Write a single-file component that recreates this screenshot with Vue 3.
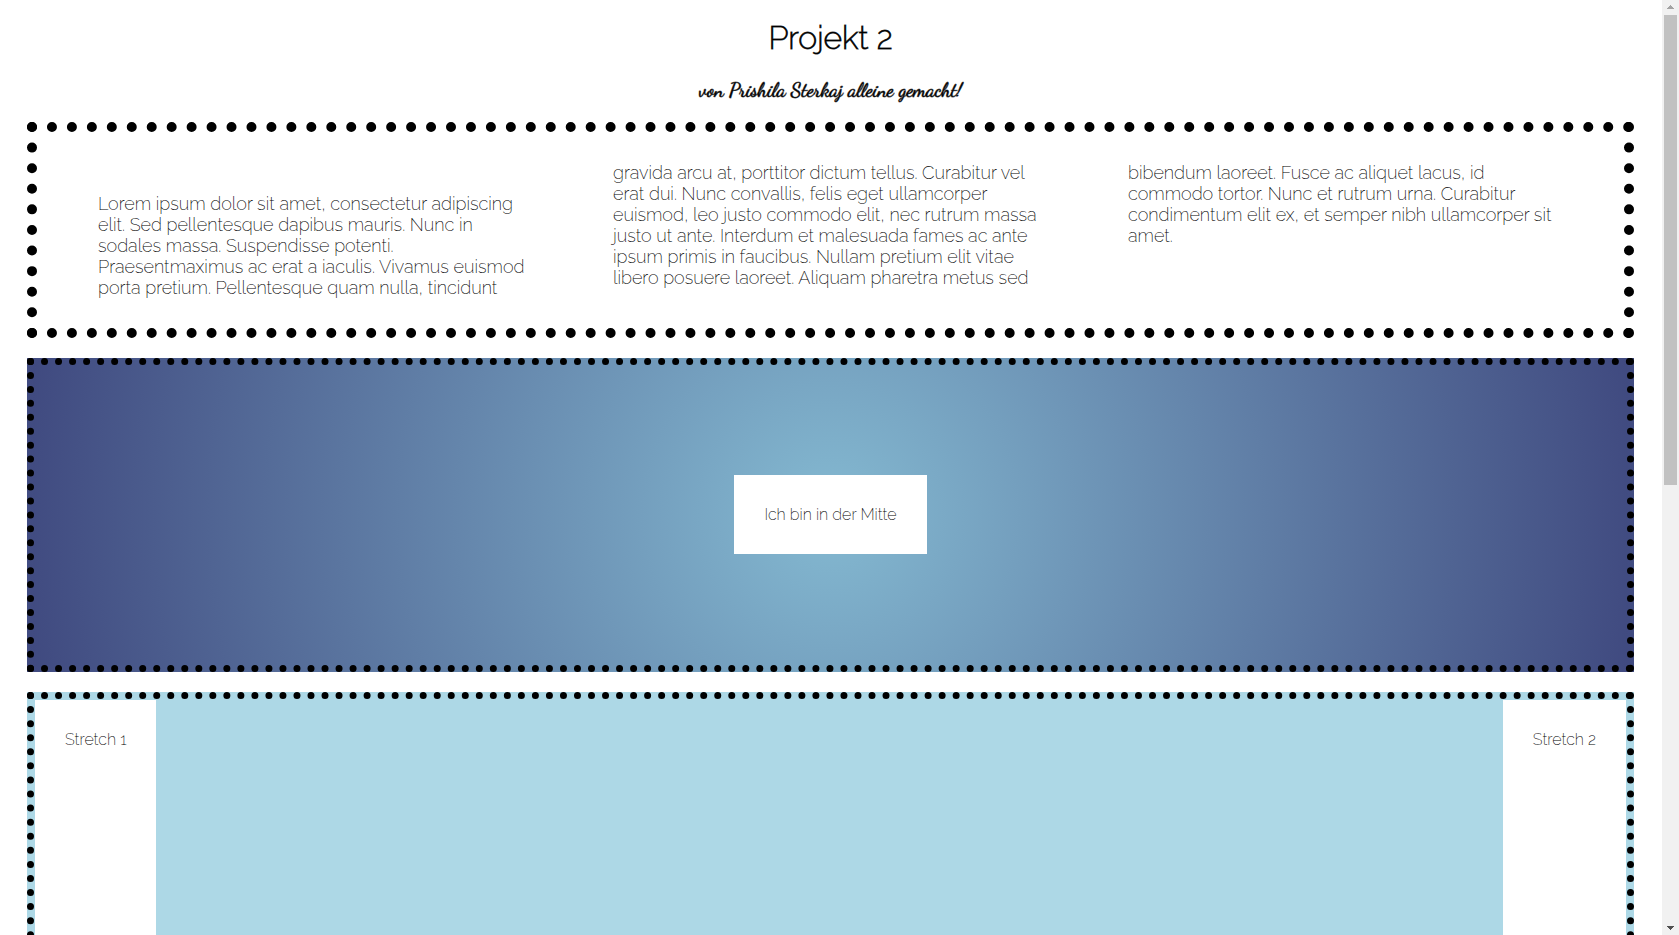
<script setup>
const columns = [
  [
    'Lorem ipsum dolor sit amet, consectetur adipiscing',
    'elit. Sed pellentesque dapibus mauris. Nunc in',
    'sodales massa. Suspendisse potenti.',
    'Praesentmaximus ac erat a iaculis. Vivamus euismod',
    'porta pretium. Pellentesque quam nulla, tincidunt',
  ],
  [
    'gravida arcu at, porttitor dictum tellus. Curabitur vel',
    'erat dui. Nunc convallis, felis eget ullamcorper',
    'euismod, leo justo commodo elit, nec rutrum massa',
    'justo ut ante. Interdum et malesuada fames ac ante',
    'ipsum primis in faucibus. Nullam pretium elit vitae',
    'libero posuere laoreet. Aliquam pharetra metus sed',
  ],
  [
    'bibendum laoreet. Fusce ac aliquet lacus, id',
    'commodo tortor. Nunc et rutrum urna. Curabitur',
    'condimentum elit ex, et semper nibh ullamcorper sit',
    'amet.',
  ],
]
</script>

<template>
  <div class="window">
    <main class="page">
      <h1>Projekt 2</h1>
      <h2>von Prishila Sterkaj alleine gemacht!</h2>

      <section class="box columns">
        <p v-for="(lines, i) in columns" :key="i">
          <span v-for="line in lines" :key="line">{{ line }}</span>
        </p>
      </section>

      <section class="box middle">
        <div class="card">Ich bin in der Mitte</div>
      </section>

      <section class="box stretch">
        <div class="card">Stretch 1</div>
        <div class="card">Stretch 2</div>
      </section>
    </main>

    <div class="scrollbar" aria-hidden="true">
      <svg class="up" width="17" height="15" viewBox="0 0 17 15" shape-rendering="crispEdges">
        <path d="M8 5h1v1h1v1h1v1h1v1H5V8h1V7h1V6h1z" />
      </svg>
      <div class="thumb"></div>
      <svg class="down" width="17" height="15" viewBox="0 0 17 15" shape-rendering="crispEdges">
        <path d="M5 6h7v1h-1v1h-1v1H9v1H8V9H7V8H6V7H5z" />
      </svg>
    </div>
  </div>
</template>

<style>
body {
  margin: 0;
  background: #fff;
}
</style>

<style scoped>
.window {
  display: flex;
  height: 100vh;
  overflow: hidden;
  color: #000;
  font-family: Raleway, Lato, sans-serif;
  font-weight: 200;
}

.page {
  flex: 1;
  min-width: 0;
  padding: 19px 28px 0 27px;
}

h1 {
  margin: 0;
  font-size: 32px;
  font-weight: 200;
  line-height: 38px;
  text-align: center;
  -webkit-text-stroke: 1px rgba(0, 0, 0, 0.8);
}

h2 {
  margin: 21px 0 19px;
  font-family: "Dancing Script", "Liberation Serif", serif;
  font-size: 20px;
  font-weight: 400;
  line-height: 25px;
  text-align: center;
  -webkit-text-stroke: 1px rgba(0, 0, 0, 0.6);
}

.box {
  box-sizing: border-box;
  margin-bottom: 20px;
  border: 7px dotted #000;
  padding: 1px;
}

.columns {
  display: grid;
  grid-template-columns: repeat(3, minmax(0, 1fr));
  gap: 20px;
  border-width: 10px;
  padding: 30px 31px;
  font-size: 18px;
  line-height: 21px;
}

.columns p {
  margin: 0;
  padding: 0 30px;
}

.columns p:first-child {
  padding-top: 31px;
}

.columns span {
  display: block;
  white-space: nowrap;
}

.middle {
  display: flex;
  align-items: center;
  justify-content: center;
  height: 314px;
  padding-bottom: 2px;
  background: radial-gradient(circle, #84b9d1 0%, #404a80 100%);
}

.stretch {
  display: flex;
  justify-content: space-between;
  height: 514px;
  background: lightblue;
}

.card {
  padding: 30px;
  background: #fff;
  font-size: 16px;
  line-height: 19px;
}

.scrollbar {
  display: flex;
  flex-direction: column;
  width: 17px;
  background: #f1f1f1;
}

.thumb {
  height: 470px;
  margin: 0 2px;
  background: #c1c1c1;
}

.up {
  fill: #a3a3a3;
}

.down {
  margin-top: auto;
  fill: #505050;
}
</style>
